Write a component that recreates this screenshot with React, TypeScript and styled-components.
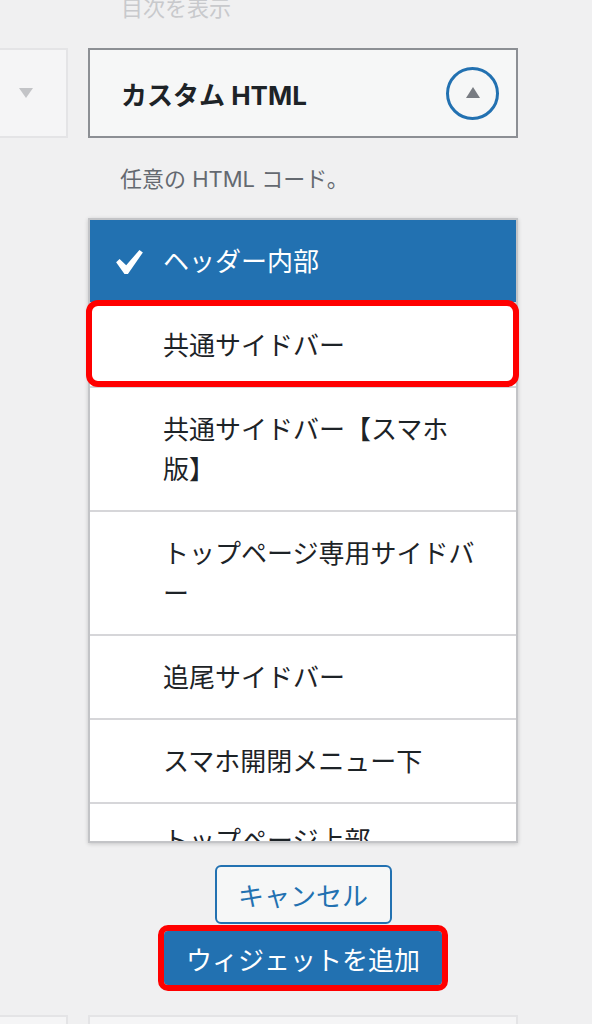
import styled, { createGlobalStyle, css } from "styled-components";

const sidebars = [
  "ヘッダー内部",
  "共通サイドバー",
  "共通サイドバー【スマホ版】",
  "トップページ専用サイドバー",
  "追尾サイドバー",
  "スマホ開閉メニュー下",
  "トップページ上部",
];

function App() {
  return (
    <>
      <GlobalStyle />
      <Page>
        <SideColumn>
          <StubCard>
            <svg width="14" height="10" viewBox="0 0 14 10">
              <path d="M0 0 H14 L7 10 Z" fill="#c3c4c7" />
            </svg>
          </StubCard>
          <StubCard $bottom />
        </SideColumn>

        <MainColumn>
          <PrevDescription>目次を表示</PrevDescription>

          <WidgetHeader>
            <WidgetTitle>カスタム HTML</WidgetTitle>
            <ToggleButton type="button" aria-label="閉じる">
              <svg width="14" height="11" viewBox="0 0 14 11">
                <path d="M7 0 L14 11 H0 Z" fill="#787c82" />
              </svg>
            </ToggleButton>
          </WidgetHeader>

          <WidgetDescription>任意の HTML コード。</WidgetDescription>

          <SidebarList>
            {sidebars.map((name, i) => (
              <SidebarOption
                key={name}
                $selected={i === 0}
                $marked={i === 1}
                $cut={i === sidebars.length - 1}
              >
                {i === 0 ? (
                  <CheckIcon viewBox="5.78 4.89 10.39 9.32">
                    <path
                      d="M14.83 4.89l1.34.94-5.81 8.38H9.02L5.78 9.67l1.34-1.25 2.57 2.4z"
                      fill="#fff"
                    />
                  </CheckIcon>
                ) : (
                  <span />
                )}
                <OptionLabel>{name}</OptionLabel>
              </SidebarOption>
            ))}
          </SidebarList>

          <Actions>
            <CancelButton type="button">キャンセル</CancelButton>
            <AddButton type="button">ウィジェットを追加</AddButton>
          </Actions>

          <NextCard />
        </MainColumn>
      </Page>
    </>
  );
}

const GlobalStyle = createGlobalStyle`
  html, body {
    margin: 0;
    padding: 0;
  }

  body {
    background: #f0f0f1;
    font-family: Inter, "Noto Sans CJK JP", sans-serif;
    color: #1d2327;
    overflow: hidden;
  }
`;

const Page = styled.div`
  display: grid;
  grid-template-columns: 68px 430px;
  column-gap: 20px;
  align-items: stretch;
  height: 1024px;
  overflow: hidden;
`;

const SideColumn = styled.div`
  display: flex;
  flex-direction: column;
  padding-top: 48px;
`;

const StubCard = styled.div<{ $bottom?: boolean }>`
  box-sizing: border-box;
  height: 90px;
  margin-left: -2px;
  padding-left: 19px;
  display: flex;
  align-items: center;
  border: 2px solid #e4e4e6;
  background: #f5f5f6;

  ${({ $bottom }) =>
    $bottom &&
    css`
      margin-top: auto;
      height: 60px;
    `}
`;

const MainColumn = styled.div`
  display: flex;
  flex-direction: column;
`;

const PrevDescription = styled.p`
  margin: 0 0 32px;
  padding-left: 33px;
  height: 16px;
  line-height: 16px;
  font-size: 22px;
  color: #c8c9cc;
`;

const WidgetHeader = styled.div`
  box-sizing: border-box;
  height: 90px;
  display: flex;
  align-items: center;
  justify-content: space-between;
  padding: 0 17px 0 31px;
  border: 2px solid #8c8f94;
  background: #f6f7f7;
`;

const WidgetTitle = styled.h3`
  margin: 0;
  font-size: 26px;
  font-weight: 700;
  color: #1d2327;
`;

const ToggleButton = styled.button`
  box-sizing: border-box;
  width: 53px;
  height: 53px;
  padding: 0 0 2px;
  display: flex;
  align-items: center;
  justify-content: center;
  border: 3px solid #2271b1;
  border-radius: 50%;
  background: transparent;
`;

const WidgetDescription = styled.p`
  margin: 26px 0 24px;
  padding-left: 32px;
  font-size: 22px;
  line-height: 30px;
  color: #646970;
`;

const SidebarList = styled.ul`
  margin: 0;
  padding: 0;
  list-style: none;
  border: 2px solid #c3c4c7;
  background: #fff;
  box-shadow: 0 1px 4px rgba(0, 0, 0, 0.18);
`;

const SidebarOption = styled.li<{
  $selected?: boolean;
  $marked?: boolean;
  $cut?: boolean;
}>`
  display: grid;
  grid-template-columns: 73px 1fr;
  padding: 22px 36px 20px 0;
  font-size: 26px;
  line-height: 40px;
  line-break: normal;
  border-bottom: 2px solid #d6d6d9;
  background: ${({ $selected }) => ($selected ? "#2271b1" : "#fff")};
  color: ${({ $selected }) => ($selected ? "#fff" : "#1d2327")};

  ${({ $marked }) =>
    $marked &&
    css`
      position: relative;

      &::after {
        content: "";
        position: absolute;
        top: -4px;
        left: -4px;
        right: -3px;
        bottom: -1px;
        border: 6px solid #ff0000;
        border-radius: 12px;
        z-index: 1;
      }
    `}

  ${({ $cut }) =>
    $cut &&
    css`
      box-sizing: border-box;
      height: 34px;
      padding-top: 17px;
      overflow: hidden;
      border-bottom: none;
    `}
`;

const CheckIcon = styled.svg`
  width: 27px;
  height: 24px;
  margin: 8px 0 0 26px;
  align-self: start;
`;

const OptionLabel = styled.span``;

const Actions = styled.div`
  display: flex;
  flex-direction: column;
  align-items: center;
  gap: 7px;
  margin-top: 22px;
`;

const CancelButton = styled.button`
  box-sizing: border-box;
  width: 177px;
  height: 59px;
  padding: 0;
  border: 2px solid #2271b1;
  border-radius: 6px;
  background: #f6f7f7;
  color: #2271b1;
  font-family: inherit;
  font-size: 26px;
`;

const AddButton = styled.button`
  box-sizing: border-box;
  width: 278px;
  height: 54px;
  padding: 0;
  border: none;
  border-radius: 4px;
  background: #2271b1;
  color: #fff;
  font-family: inherit;
  font-size: 26px;
  outline: 6px solid #ff0000;
`;

const NextCard = styled.div`
  box-sizing: border-box;
  height: 60px;
  margin-top: 30px;
  border: 2px solid #e4e4e6;
  background: #f5f5f6;
`;

export default App;
